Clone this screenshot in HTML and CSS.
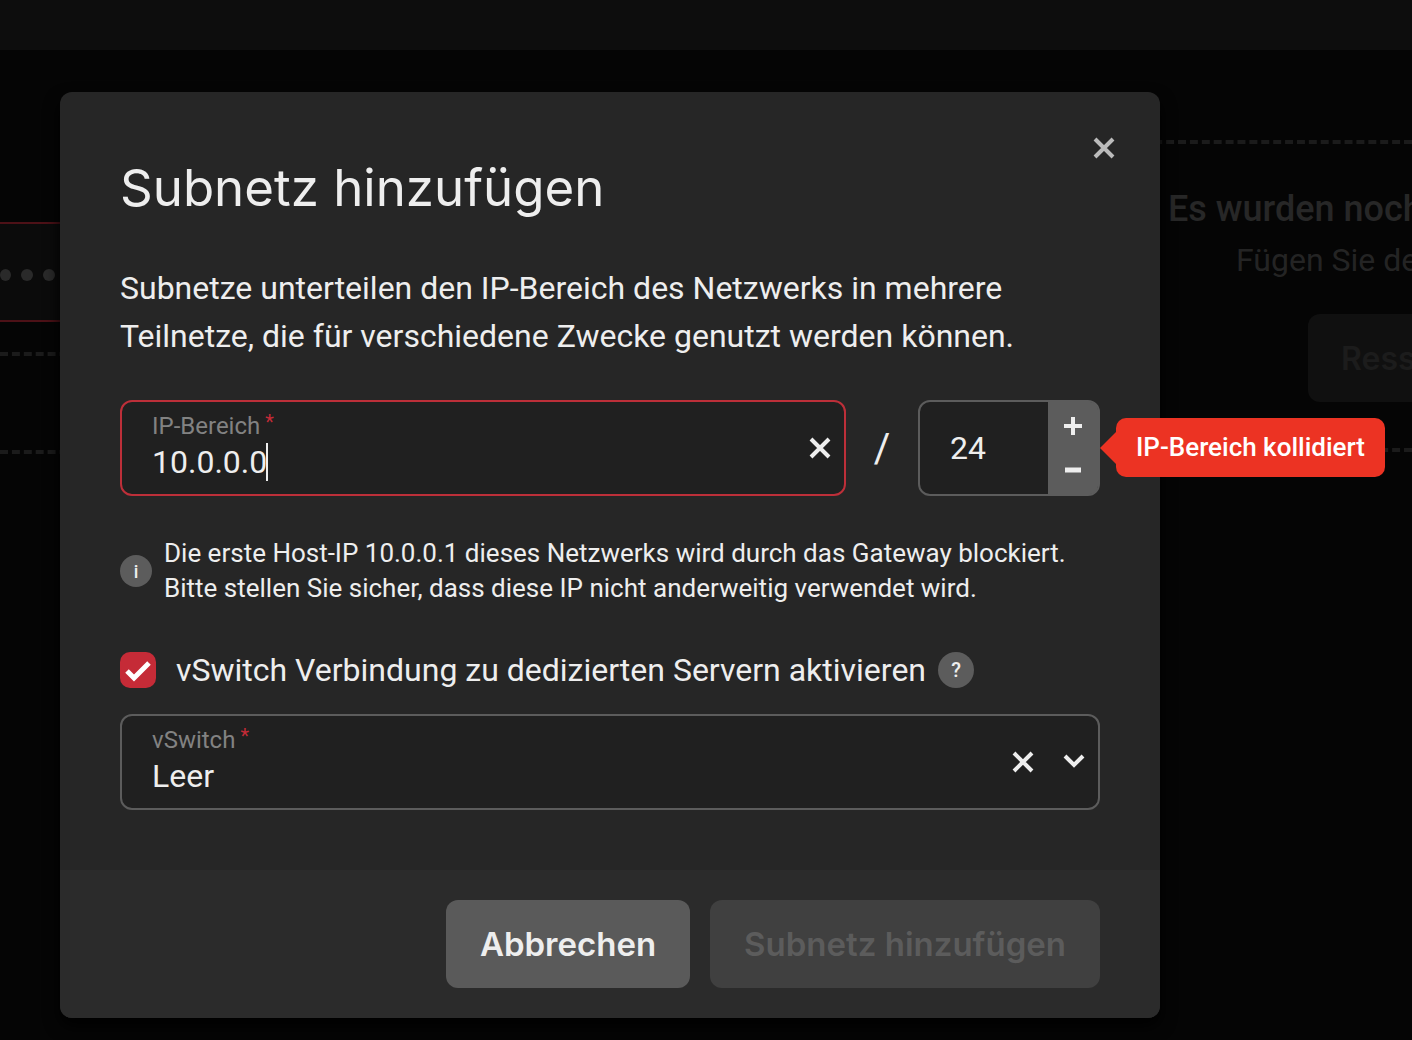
FILE: index.html
```html
<!DOCTYPE html>
<html lang="de">
<head>
<meta charset="utf-8">
<meta name="viewport" content="width=device-width, initial-scale=1">
<title>Subnetz hinzufügen</title>
<link rel="stylesheet" href="styles.css">
</head>
<body>
<div class="page">
  <header class="topbar"></header>
  <main class="columns">
    <section class="networks">
      <div class="network-card">
        <span class="dot"></span><span class="dot"></span><span class="dot"></span>
      </div>
      <div class="dropzone"></div>
    </section>
    <section class="resources">
      <h2 class="resources-title">Es wurden noch</h2>
      <p class="resources-text">Fügen Sie de</p>
      <button class="resources-button" type="button" disabled>Ress</button>
    </section>
  </main>
</div>

<div class="overlay">
  <form class="modal" role="dialog" aria-modal="true" aria-labelledby="modal-title">
    <button class="icon-button close" type="button" aria-label="Schließen">
      <svg class="icon" viewBox="0 0 24 24"><path d="M3 3 21 21M21 3 3 21"/></svg>
    </button>
    <div class="modal-body">
      <h1 class="title" id="modal-title">Subnetz hinzufügen</h1>
      <p class="intro">Subnetze unterteilen den IP-Bereich des Netzwerks in mehrere Teilnetze, die für verschiedene Zwecke genutzt werden können.</p>

      <div class="range">
        <div class="field field-error">
          <div class="field-main">
            <label class="field-label" for="ip">IP-Bereich<span class="required">*</span></label>
            <div class="field-value">
              <input class="control control-ip" id="ip" type="text" value="10.0.0.0"><span class="caret"></span>
            </div>
          </div>
          <button class="icon-button" type="button" aria-label="Leeren">
            <svg class="icon" viewBox="0 0 24 24"><path d="M3 3 21 21M21 3 3 21"/></svg>
          </button>
        </div>
        <span class="slash">/</span>
        <div class="stepper">
          <input class="control control-mask" type="number" value="24" aria-label="Präfixlänge">
          <div class="stepper-buttons">
            <button class="step" type="button" aria-label="Erhöhen">
              <svg class="step-icon" viewBox="0 0 20 20"><path d="M1 10H19M10 1V19"/></svg>
            </button>
            <button class="step" type="button" aria-label="Verringern">
              <svg class="step-icon" viewBox="0 0 20 20"><path class="thick" d="M2 10H18"/></svg>
            </button>
          </div>
          <div class="tooltip" role="alert">IP-Bereich kollidiert</div>
        </div>
      </div>

      <div class="info">
        <span class="badge">i</span>
        <p class="info-text">Die erste Host-IP 10.0.0.1 dieses Netzwerks wird durch das Gateway blockiert. Bitte stellen Sie sicher, dass diese IP nicht anderweitig verwendet wird.</p>
      </div>

      <div class="check-row">
        <span class="check">
          <input class="check-input" id="vswitch-on" type="checkbox" checked>
          <svg class="check-mark" viewBox="0 0 36 36"><path d="M7 19 14 26 29 11"/></svg>
        </span>
        <label class="check-label" for="vswitch-on">vSwitch Verbindung zu dedizierten Servern aktivieren</label>
        <button class="badge badge-large" type="button">?</button>
      </div>

      <div class="field field-select">
        <div class="field-main">
          <label class="field-label" for="vswitch">vSwitch<span class="required">*</span></label>
          <select class="control" id="vswitch"><option>Leer</option></select>
        </div>
        <button class="icon-button" type="button" aria-label="Auswahl leeren">
          <svg class="icon" viewBox="0 0 24 24"><path d="M3 3 21 21M21 3 3 21"/></svg>
        </button>
        <svg class="icon" viewBox="0 0 24 24"><path d="M3 6 12 15 21 6"/></svg>
      </div>
    </div>
    <footer class="modal-footer">
      <button class="button" type="button">Abbrechen</button>
      <button class="button" type="submit" disabled>Subnetz hinzufügen</button>
    </footer>
  </form>
</div>
</body>
</html>
```
FILE: styles.css
```css
* { box-sizing: border-box; }

body {
  margin: 0;
  background: #050505;
  color: #eee;
  font-family: Roboto, "Liberation Sans", sans-serif;
  font-size: 32px;
  overflow-x: hidden;
}

h1, h2, p { margin: 0; }

button, input, select { font: inherit; color: inherit; }

button {
  border: 0;
  padding: 0;
  background: none;
  cursor: pointer;
}

/* Dimmed page behind the dialog */
.page {
  min-height: 100vh;
  overflow: hidden;
}

.topbar {
  height: 50px;
  background: #0d0d0d;
}

.columns {
  display: grid;
  grid-template-columns: 1fr 1fr;
  gap: 40px;
}

.networks { padding-top: 172px; }

.network-card {
  display: flex;
  align-items: center;
  gap: 10px;
  height: 100px;
  margin-bottom: 30px;
  border: solid #4d1117;
  border-width: 2px 0;
  background: #0b0b0b;
  padding-top: 6px;
}

.dot {
  width: 12px;
  height: 12px;
  border-radius: 50%;
  background: #2a2a2a;
}

.dot:first-child { width: 11px; }

.dropzone {
  height: 102px;
  border: dashed #1b1b1b;
  border-width: 4px 0;
}

.resources {
  display: flex;
  flex-direction: column;
  align-items: flex-end;
  height: 312px;
  margin-top: 90px;
  padding-top: 40px;
  border: dashed #1b1b1b;
  border-width: 4px 0;
  white-space: nowrap;
}

.resources-title {
  width: 244px;
  font-size: 36px;
  font-weight: 500;
  line-height: 50px;
  color: #272727;
}

.resources-text {
  width: 176px;
  line-height: 52px;
  color: #242424;
}

.resources-button {
  width: 104px;
  height: 88px;
  margin-top: 28px;
  padding-left: 33px;
  border-radius: 12px 0 0 12px;
  background: #101010;
  color: #1c1c1c;
  font-family: Inter, sans-serif;
  font-size: 32px;
  font-weight: 600;
  text-align: left;
}

/* Dialog */
.overlay {
  position: absolute;
  inset: 0;
  padding: 92px 252px 22px 60px;
}

.modal {
  position: relative;
  border-radius: 12px;
  background: #262626;
  box-shadow: 0 8px 16px #000;
}

.modal-body { padding: 68px 60px 60px; }

.close {
  position: absolute;
  top: 44px;
  right: 44px;
  color: #bbb;
}

.title {
  margin-bottom: 48px;
  font-family: Inter, sans-serif;
  font-size: 51px;
  font-weight: 400;
  line-height: 56px;
}

.intro {
  margin-bottom: 40px;
  line-height: 48px;
}

.icon-button { display: flex; }

.icon {
  width: 24px;
  height: 24px;
  fill: none;
  stroke: currentColor;
  stroke-width: 4;
}

.range {
  display: flex;
  align-items: center;
  margin-bottom: 40px;
}

.field {
  display: flex;
  flex: 1;
  align-items: center;
  gap: 27px;
  height: 96px;
  padding: 0 12px 0 30px;
  border: 2px solid #5c5c5c;
  border-radius: 12px;
  background: #202020;
}

.field-error { border-color: #bd2f39; }

.field-main {
  display: flex;
  flex: 1;
  flex-direction: column;
  align-items: flex-start;
  padding-bottom: 4px;
}

.field-label {
  display: flex;
  font-size: 24px;
  line-height: 32px;
  color: #828282;
}

.required {
  margin-left: 5px;
  color: #c52b37;
  font-size: 20px;
  line-height: 24px;
}

.field-value {
  display: flex;
  align-items: center;
}

.control {
  height: 40px;
  padding: 0;
  border: 0;
  outline: 0;
  background: none;
  line-height: 40px;
  appearance: none;
}

select.control { width: 100%; }

.control-ip { width: 114px; }

.caret {
  width: 2px;
  height: 38px;
  background: #eee;
}

.slash {
  width: 72px;
  font-size: 40px;
  text-align: center;
}

.stepper {
  position: relative;
  display: flex;
  width: 182px;
  height: 96px;
  border: 2px solid #5c5c5c;
  border-radius: 12px;
  background: #202020;
}

.control-mask {
  flex: 1;
  width: 0;
  height: 100%;
  padding-left: 30px;
  appearance: textfield;
}

.stepper-buttons {
  display: flex;
  flex-direction: column;
  justify-content: center;
  width: 50px;
  border-radius: 0 8px 8px 0;
  background: #5c5c5c;
}

.step {
  display: grid;
  place-items: center;
  height: 44px;
}

.step-icon {
  width: 20px;
  height: 20px;
  fill: none;
  stroke: currentColor;
  stroke-width: 4;
}

.thick { stroke-width: 5; }

.tooltip {
  position: absolute;
  top: 16px;
  left: calc(100% + 18px);
  padding: 0 20px;
  border-radius: 10px;
  background: #ec3323;
  color: #fff;
  font-size: 26px;
  font-weight: 500;
  line-height: 59px;
  white-space: nowrap;
}

.tooltip::before {
  content: "";
  position: absolute;
  top: 14px;
  right: 100%;
  border: solid transparent;
  border-width: 16px 16px 16px 0;
  border-right-color: #ec3323;
}

.info {
  display: flex;
  align-items: center;
  gap: 12px;
  margin-bottom: 46px;
}

.info-text {
  font-size: 26px;
  line-height: 35px;
}

.badge {
  display: grid;
  flex: none;
  place-items: center;
  width: 32px;
  height: 32px;
  border-radius: 50%;
  background: #5c5c5c;
  font-size: 18px;
  font-weight: 500;
}

.badge-large {
  width: 36px;
  height: 36px;
  font-size: 20px;
}

.check-row {
  display: flex;
  align-items: center;
  gap: 12px;
  margin-bottom: 26px;
}

.check {
  position: relative;
  width: 36px;
  height: 36px;
  margin-right: 8px;
}

.check-input {
  display: block;
  width: 100%;
  height: 100%;
  margin: 0;
  border-radius: 10px;
  background: #c52b37;
  appearance: none;
}

.check-mark {
  position: absolute;
  inset: 0;
  fill: none;
  stroke: #fff;
  stroke-width: 5;
  pointer-events: none;
}

.check-label { line-height: 36px; }

.modal-footer {
  display: flex;
  justify-content: flex-end;
  gap: 20px;
  padding: 30px 60px;
  border-radius: 0 0 12px 12px;
  background: #2b2b2b;
}

.button {
  height: 88px;
  padding: 0 34px;
  border-radius: 12px;
  background: #5a5a5a;
  font-family: Inter, sans-serif;
  font-size: 33px;
  font-weight: 600;
}

.button:disabled {
  background: #404040;
  color: #5c5c5c;
}
```
